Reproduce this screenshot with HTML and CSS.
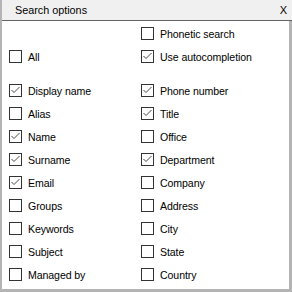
FILE: index.html
```html
<!DOCTYPE html>
<html>
<head>
<meta charset="utf-8">
<link rel="stylesheet" href="styles.css">
</head>
<body>
<div class="window">
  <div class="titlebar">
    <span class="title">Search options</span>
    <span class="close">X</span>
  </div>
  <div class="content">
    <div class="grid top">
      <div class="cell"></div>
      <div class="cell"><span class="box"></span><span class="label">Phonetic search</span></div>
      <div class="cell"><span class="box"></span><span class="label">All</span></div>
      <div class="cell"><span class="box"><svg class="tick" viewBox="0 0 11 11"><polyline points="1.5,5 4,7.5 9.5,2"/></svg></span><span class="label">Use autocompletion</span></div>
    </div>
    <div class="grid fields">
      <div class="cell"><span class="box"><svg class="tick" viewBox="0 0 11 11"><polyline points="1.5,5 4,7.5 9.5,2"/></svg></span><span class="label">Display name</span></div>
      <div class="cell"><span class="box"><svg class="tick" viewBox="0 0 11 11"><polyline points="1.5,5 4,7.5 9.5,2"/></svg></span><span class="label">Phone number</span></div>
      <div class="cell"><span class="box"></span><span class="label">Alias</span></div>
      <div class="cell"><span class="box"><svg class="tick" viewBox="0 0 11 11"><polyline points="1.5,5 4,7.5 9.5,2"/></svg></span><span class="label">Title</span></div>
      <div class="cell"><span class="box"><svg class="tick" viewBox="0 0 11 11"><polyline points="1.5,5 4,7.5 9.5,2"/></svg></span><span class="label">Name</span></div>
      <div class="cell"><span class="box"></span><span class="label">Office</span></div>
      <div class="cell"><span class="box"><svg class="tick" viewBox="0 0 11 11"><polyline points="1.5,5 4,7.5 9.5,2"/></svg></span><span class="label">Surname</span></div>
      <div class="cell"><span class="box"><svg class="tick" viewBox="0 0 11 11"><polyline points="1.5,5 4,7.5 9.5,2"/></svg></span><span class="label">Department</span></div>
      <div class="cell"><span class="box"><svg class="tick" viewBox="0 0 11 11"><polyline points="1.5,5 4,7.5 9.5,2"/></svg></span><span class="label">Email</span></div>
      <div class="cell"><span class="box"></span><span class="label">Company</span></div>
      <div class="cell"><span class="box"></span><span class="label">Groups</span></div>
      <div class="cell"><span class="box"></span><span class="label">Address</span></div>
      <div class="cell"><span class="box"></span><span class="label">Keywords</span></div>
      <div class="cell"><span class="box"></span><span class="label">City</span></div>
      <div class="cell"><span class="box"></span><span class="label">Subject</span></div>
      <div class="cell"><span class="box"></span><span class="label">State</span></div>
      <div class="cell"><span class="box"></span><span class="label">Managed by</span></div>
      <div class="cell"><span class="box"></span><span class="label">Country</span></div>
    </div>
  </div>
</div>
</body>
</html>
```
FILE: styles.css
```css
html, body {
  margin: 0;
  padding: 0;
}
body {
  width: 292px;
  height: 292px;
  background: #b4b4b4;
  font-family: "Liberation Sans", Arial, sans-serif;
  font-size: 10.6px;
  color: #000;
  overflow: hidden;
}
.window {
  margin: 0 3px 0 2px;
  height: 289px;
  display: flex;
  flex-direction: column;
}
.titlebar {
  height: 20px;
  background: #f0f0f0;
  border-bottom: 1px solid #646464;
  display: flex;
  align-items: center;
  justify-content: space-between;
  padding: 0 5px 0 13px;
  margin-right: -3px;
  font-size: 10.8px;
}
.close {
  font-size: 11px;
}
.content {
  flex: 1;
  background: #fff;
  padding: 1px 0 0 7px;
}
.grid {
  display: grid;
  grid-template-columns: 132px 1fr;
  grid-auto-rows: 23px;
}
.fields {
  margin-top: 11px;
}
.cell {
  display: flex;
  align-items: center;
}
.box {
  width: 11px;
  height: 11px;
  border: 1px solid #333;
  background: #fff;
  margin-right: 6px;
  flex: none;
  display: flex;
}
.tick {
  width: 11px;
  height: 11px;
  fill: none;
  stroke: #4a4a4a;
  stroke-width: 1;
}
.label {
  white-space: nowrap;
  letter-spacing: -0.1px;
}
```
